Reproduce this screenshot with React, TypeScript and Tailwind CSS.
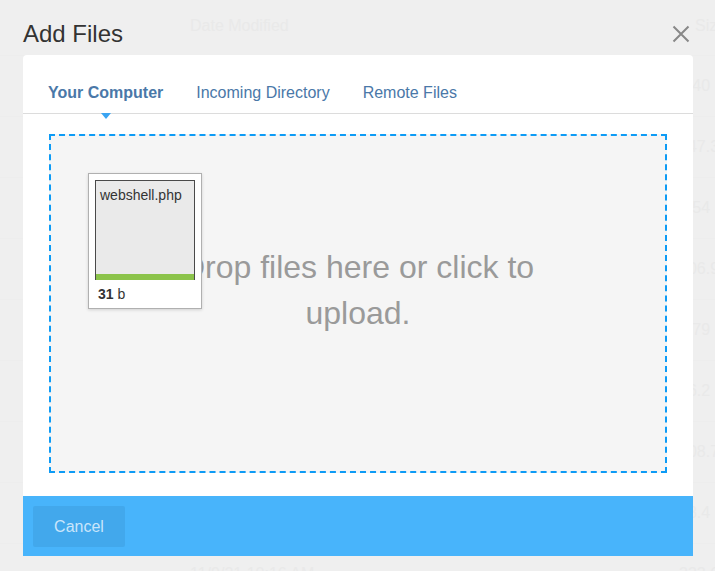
import React from "react";

const sizes = ["1.40 MB", "147.3 KB", "8.54 MB", "106.9 KB", "1.79 MB", "86.2 KB", "108.7 KB", "98.4 KB", "333.6 KB"];

function Background() {
  return (
    <div className="h-[571px] w-[715px] overflow-hidden bg-[#efefef] text-[#e9e9e9] text-[16px]" style={{ fontFamily: '"Liberation Sans", Arial, sans-serif' }}>
      <div className="flex h-[55px] items-center pl-[190px] pb-[4px]">
        <div className="w-[505px] shrink-0 whitespace-nowrap">Date Modified</div>
        <div className="shrink-0 whitespace-nowrap">Size</div>
      </div>
      {sizes.map((s, i) => (
        <div key={i} className="flex h-[61px] items-center border-t border-[#ededed] pl-[190px]">
          <div className="w-[489px] shrink-0 whitespace-nowrap">{i === 8 ? "11/9/21 10:16 AM" : ""}</div>
          <div className="shrink-0 whitespace-nowrap">{s}</div>
        </div>
      ))}
    </div>
  );
}

function CloseIcon() {
  return (
    <svg width="18" height="18" viewBox="0 0 18 18" className="block">
      <path d="M1.5 1.5 L16.5 16.5 M16.5 1.5 L1.5 16.5" stroke="#888" strokeWidth="2" />
    </svg>
  );
}

export default function App() {
  return (
    <div className="relative h-[571px] overflow-hidden">
      <Background />
      <div className="absolute inset-0 flex flex-col text-[#333]" style={{ fontFamily: '"Liberation Sans", Arial, sans-serif' }}>
        <div className="flex h-[55px] items-start justify-between pl-[23px] pr-[25px] pt-[20px]">
          <div className="text-[24px] leading-[28px] text-[#333]">Add Files</div>
          <div className="pt-[5px]">
            <CloseIcon />
          </div>
        </div>
        <div className="ml-[23px] w-[670px] rounded-t-[4px] bg-white">
          <div className="flex gap-[33px] border-b border-[#dcdcdc] pl-[25px] pt-[28px] pb-[11px] text-[16px] leading-[19px] text-[#4a78a8]">
            <div className="relative font-bold">
              Your Computer
              <div className="absolute left-1/2 top-[30px] h-0 w-0 -translate-x-1/2 border-x-[5px] border-t-[6px] border-x-transparent border-t-[#3aa4f2]" />
            </div>
            <div>Incoming Directory</div>
            <div>Remote Files</div>
          </div>
          <div className="px-[26px] pt-[20px] pb-[23px]">
            <div className="relative flex h-[339px] flex-col items-center justify-center border-2 border-dashed border-[#0d9bf5] bg-[#f5f5f5] pb-[28px]">
              <div className="text-center text-[32px] leading-[46px] text-[#9a9a9a]">
                Drop files here or click to
                <br />
                upload.
              </div>
              <div className="absolute left-[37px] top-[37px] w-[114px] border border-[#b0b0b0] bg-white p-[6px] shadow-[0_1px_3px_rgba(0,0,0,0.15)]">
                <div className="flex h-[100px] flex-col border-x border-t border-[#4a4a4a] bg-[#eaeaea]">
                  <div className="flex-1 px-[4px] pt-[6px] text-[14px] leading-[16px] text-[#333]">webshell.php</div>
                  <div className="h-[6px] bg-[#8bc34a]" />
                </div>
                <div className="px-[3px] pt-[7px] text-[14px] leading-[15px] text-[#333]">
                  <span className="font-bold">31</span> b
                </div>
              </div>
            </div>
          </div>
          <div className="h-[60px] bg-[#48b4fb] p-[10px]">
            <button className="h-[41px] w-[92px] rounded-[2px] bg-[#42a8ec] pt-[1px] text-[16px] text-[#c9e5fb]">Cancel</button>
          </div>
        </div>
      </div>
    </div>
  );
}
